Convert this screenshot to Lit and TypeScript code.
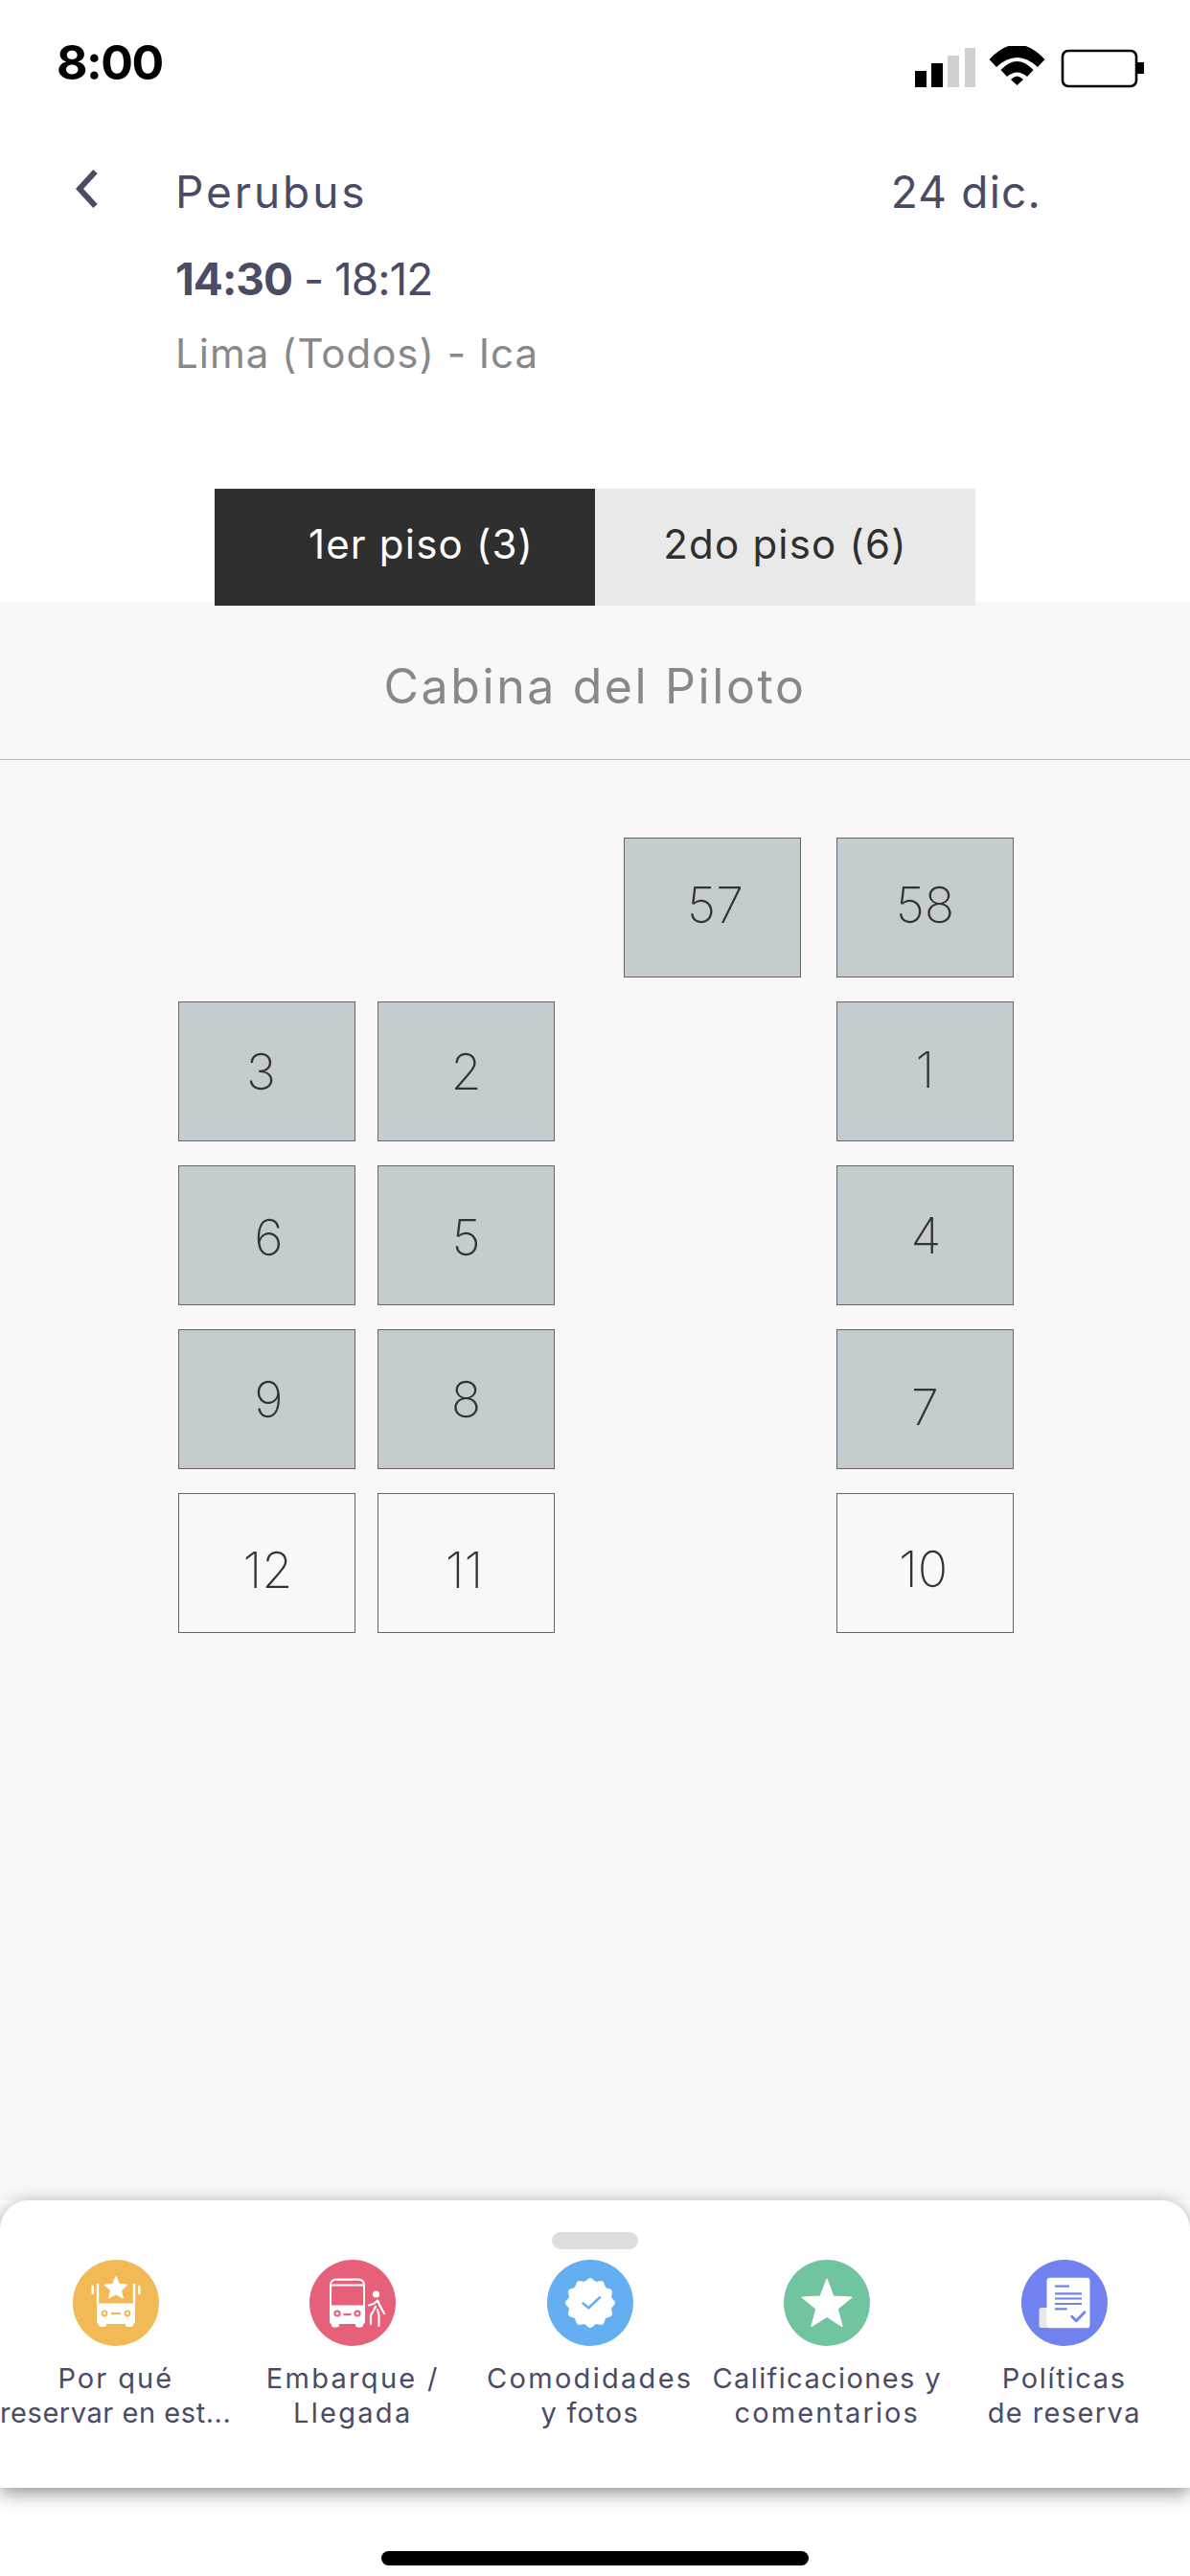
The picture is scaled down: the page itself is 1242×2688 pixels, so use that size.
import { LitElement, html, css, svg } from "lit";
import { customElement } from "lit/decorators.js";

type Seat = { n: string; col: number; row: number; free?: boolean; dx?: number; dy?: number };
const seats: Seat[] = [
  { n: "57", col: 3, row: 1, dx: 3, dy: -3 }, { n: "58", col: 4, row: 1, dy: -3 },
  { n: "3", col: 1, row: 2, dx: -6 }, { n: "2", col: 2, row: 2 }, { n: "1", col: 4, row: 2, dy: -2 },
  { n: "6", col: 1, row: 3, dx: 2, dy: 2 }, { n: "5", col: 2, row: 3, dy: 2 }, { n: "4", col: 4, row: 3, dx: 1 },
  { n: "9", col: 1, row: 4, dx: 2 }, { n: "8", col: 2, row: 4 }, { n: "7", col: 4, row: 4, dy: 8 },
  { n: "12", col: 1, row: 5, free: true, dx: 1, dy: 7 }, { n: "11", col: 2, row: 5, free: true, dx: -2, dy: 7 }, { n: "10", col: 4, row: 5, free: true, dx: -2, dy: 6 },
];

const scallop = (() => {
  const pts: string[] = [];
  for (let i = 0; i < 240; i++) {
    const t = (i / 240) * Math.PI * 2;
    const r = 24.5 + 1.5 * Math.cos(12 * t);
    pts.push(`${(45 + r * Math.cos(t)).toFixed(2)},${(45 + r * Math.sin(t)).toFixed(2)}`);
  }
  return pts.join(" ");
})();

const starPts = (cx: number, cy: number, R: number, r: number) => {
  const pts: string[] = [];
  for (let i = 0; i < 10; i++) {
    const a = -Math.PI / 2 + (i * Math.PI) / 5;
    const d = i % 2 ? r : R;
    pts.push(`${(cx + d * Math.cos(a)).toFixed(2)},${(cy + d * Math.sin(a)).toFixed(2)}`);
  }
  return pts.join(" ");
};

const icons = [
  svg`<circle cx="45" cy="45" r="45" fill="#f2b957"/>
    <polygon points="${starPts(45, 30, 12, 5.5)}" fill="#fff" stroke="#fff" stroke-width="1.5" stroke-linejoin="round"/>
    <path d="M26 25V46M64 25V46" stroke="#fff" stroke-width="2.4" fill="none"/>
    <path d="M20.7 28V35M69.3 28V35" stroke="#fff" stroke-width="2.4" stroke-linecap="round" fill="none"/>
    <path d="M25 45.5H65V65Q65 67 63 67H27Q25 67 25 65Z" fill="#fff"/>
    <rect x="27" y="64" width="8" height="6" rx="2.5" fill="#fff"/><rect x="55" y="64" width="8" height="6" rx="2.5" fill="#fff"/>
    <circle cx="33" cy="56" r="3.4" fill="#f2b957"/><circle cx="33" cy="56" r="1.4" fill="#fff"/>
    <circle cx="57" cy="56" r="3.4" fill="#f2b957"/><circle cx="57" cy="56" r="1.4" fill="#fff"/>
    <rect x="40" y="55" width="10" height="2.2" fill="#f2b957"/>`,
  svg`<circle cx="45" cy="45" r="45" fill="#e6607a"/>
    <path d="M21 27Q21 19.5 28 19.5H51Q58 19.5 58 27V65Q58 67 56 67H23Q21 67 21 65Z" fill="#fff"/>
    <path d="M23 25.5Q23.5 21.8 28 21.8H51Q55.5 21.8 56 25.5Z" fill="#e6607a"/>
    <rect x="23" y="27.5" width="33" height="20" fill="#e6607a"/>
    <rect x="23" y="64" width="8" height="6.5" rx="2.5" fill="#fff"/><rect x="48" y="64" width="8" height="6.5" rx="2.5" fill="#fff"/>
    <circle cx="29" cy="56" r="3.6" fill="#e6607a"/><circle cx="29" cy="56" r="1.5" fill="#fff"/>
    <circle cx="50" cy="56" r="3.6" fill="#e6607a"/><circle cx="50" cy="56" r="1.5" fill="#fff"/>
    <rect x="35.5" y="56" width="8" height="2.2" fill="#e6607a"/>
    <circle cx="69.5" cy="36" r="3.6" fill="#fff"/>
    <path d="M62 47.5L67 46L71 42.5L74 49L78 56M69 49L64 58V67M71 52L72.5 58V69" stroke="#fff" stroke-width="2.2" fill="none" stroke-linecap="round" stroke-linejoin="round"/>`,
  svg`<circle cx="45" cy="45" r="45" fill="#64aff2"/>
    <polygon points="${scallop}" fill="#fff"/>
    <path d="M37.5 45.5L43.3 50.3L55 39.3" stroke="#64aff2" stroke-width="2.6" fill="none" stroke-linecap="round" stroke-linejoin="round"/>`,
  svg`<circle cx="45" cy="45" r="45" fill="#70c4a0"/>
    <polygon points="${starPts(45, 47.5, 27, 11.5)}" fill="#fff" stroke="#fff" stroke-width="1.5" stroke-linejoin="round"/>`,
  svg`<circle cx="45" cy="45" r="45" fill="#6f82f0"/>
    <path d="M21 50H30V71H21Q18.5 71 18.5 68.5V52.5Q18.5 50 21 50Z" fill="#e8e8e8"/>
    <rect x="26.5" y="18.7" width="45" height="52.6" rx="3" fill="#fff"/>
    <path d="M35 27.7H50M35 35.3H63M35 40.5H63M35 46H63M35 51.3H47.7" stroke="#6f82f0" stroke-width="2.2" fill="none"/>
    <path d="M52.7 59.3L57.3 63.7L66 54.7" stroke="#6f82f0" stroke-width="2.8" fill="none" stroke-linecap="round" stroke-linejoin="round"/>`,
];

/* Each line carries the tracking that makes it as wide as in the reference. */
const links: [string, number][][] = [
  [["Por qué", 2], ["reservar en est...", 0.55]],
  [["Embarque /", 2.3], ["Llegada", 2.3]],
  [["Comodidades", 2.3], ["y fotos", 1.3]],
  [["Calificaciones y", 1.4], ["comentarios", 2.1]],
  [["Políticas", 1.7], ["de reserva", 1.4]],
];

@customElement("app-root")
export class AppRoot extends LitElement {
  static styles = css`
    :host {
      display: flex;
      flex-direction: column;
      width: 1242px;
      height: 2688px;
      overflow: hidden;
      background: #fff;
      font-family: Inter, "Liberation Sans", sans-serif;
      color: #4a4b65;
    }
    .status {
      height: 128px;
      box-sizing: border-box;
      display: flex;
      justify-content: space-between;
      padding: 40px 48px 0 59px;
    }
    .clock {
      font-size: 50px;
      line-height: 50px;
      font-weight: 700;
      color: #000;
      letter-spacing: -1.5px;
    }
    .status svg { margin-top: 8px; display: block; }
    .head {
      height: 382px;
      box-sizing: border-box;
      display: flex;
      padding: 44px 0 0 79px;
    }
    .back { width: 104px; flex: none; padding-top: 5px; }
    .back svg { display: block; }
    .info { flex: 1; }
    .top {
      display: flex;
      justify-content: space-between;
      padding-right: 155px;
      font-size: 46px;
      line-height: 56px;
      letter-spacing: 1.2px;
    }
    .top span:first-child { letter-spacing: 2.9px; }
    .times {
      margin-top: 35px;
      font-size: 46px;
      line-height: 56px;
      letter-spacing: -1px;
    }
    .times b { font-weight: 700; }
    .route {
      margin-top: 24px;
      font-size: 42px;
      line-height: 52px;
      color: #888;
      font-weight: 400;
      letter-spacing: 1px;
    }
    .tabs {
      display: flex;
      justify-content: center;
      position: relative;
      z-index: 1;
      margin-bottom: -4px;
    }
    .tab {
      width: 397px;
      height: 122px;
      box-sizing: border-box;
      display: flex;
      align-items: center;
      justify-content: center;
      padding-bottom: 8px;
      font-size: 42px;
      letter-spacing: 1.2px;
      background: #e9e9e9;
      color: #2f2f2f;
    }
    .tab.on { background: #2f2f2f; color: #fff; padding-left: 34px; }
    .deck {
      flex: 1;
      background: #f8f8f8;
      display: flex;
      flex-direction: column;
    }
    .cabin {
      height: 165px;
      box-sizing: border-box;
      border-bottom: 1px solid #bdbdbd;
      display: flex;
      align-items: center;
      justify-content: center;
      font-size: 50px;
      letter-spacing: 2.6px;
      color: #888;
      padding-top: 12px;
    }
    .seats {
      display: grid;
      grid-template-columns: 186px 185px 23px 185px 72px 185px 37px 185px;
      grid-auto-rows: 146px;
      row-gap: 25px;
      padding-top: 81px;
    }
    .seat {
      border: 1.5px solid #666;
      box-sizing: border-box;
      background: #c4ccd0;
      display: flex;
      align-items: center;
      justify-content: center;
      font-size: 52px;
      font-weight: 200;
      color: #333;
    }
    .seat.free { background: transparent; }
    .panel {
      height: 300px;
      box-sizing: border-box;
      background: #fff;
      border-radius: 30px 30px 0 0;
      box-shadow: 0 5px 20px rgba(0, 0, 0, 0.45);
      position: relative;
      z-index: 2;
      padding-top: 33px;
      display: flex;
      flex-direction: column;
      align-items: center;
    }
    .handle {
      width: 90px;
      height: 18px;
      border-radius: 9px;
      background: #ddd;
    }
    .links {
      align-self: flex-start;
      margin: 11px 0 0 -3px;
      display: flex;
    }
    .link {
      width: 247.5px;
      flex: none;
      display: flex;
      flex-direction: column;
      align-items: center;
      font-size: 29px;
      line-height: 36px;
      text-align: center;
      white-space: nowrap;
    }
    .link svg { display: block; margin-bottom: 16px; }
    .foot {
      height: 92px;
      flex: none;
      display: flex;
      justify-content: center;
      padding-top: 66px;
      box-sizing: border-box;
    }
    .bar {
      width: 446px;
      height: 15px;
      border-radius: 8px;
      background: #000;
    }
  `;

  render() {
    return html`
      <div class="status">
        <div class="clock">8:00</div>
        <svg width="239" height="48" viewBox="954 48 239 48" aria-hidden="true">
          <rect x="954" y="74" width="12" height="17" fill="#000"/>
          <rect x="971" y="66" width="12" height="25" fill="#000"/>
          <rect x="988" y="58" width="12" height="33" fill="#d0d0d0"/>
          <rect x="1006" y="50" width="11" height="41" fill="#d0d0d0"/>
          <path d="M1031.5 62 Q1060.5 31 1089.5 62 L1082 70 Q1060.5 50 1039 70Z" fill="#000"/>
          <path d="M1043.5 73 Q1060.5 55 1077.5 73 L1071 80 Q1060.5 71 1050 80Z" fill="#000"/>
          <path d="M1054 83 Q1060.5 76 1067 83 L1060.5 89Z" fill="#000"/>
          <rect x="1108" y="53" width="77" height="37" rx="6" fill="none" stroke="#000" stroke-width="2.6"/>
          <rect x="1186" y="65" width="7" height="12" fill="#000"/>
        </svg>
      </div>
      <div class="head">
        <div class="back">
          <svg width="24" height="40" viewBox="0 0 24 40"><path d="M20.5 2L4 20L20.5 38" fill="none" stroke="#4a4b65" stroke-width="6"/></svg>
        </div>
        <div class="info">
          <div class="top"><span>Perubus</span><span>24 dic.</span></div>
          <div class="times"><b>14:30</b> - 18:12</div>
          <div class="route">Lima (Todos) - Ica</div>
        </div>
      </div>
      <div class="tabs">
        <div class="tab on">1er piso (3)</div>
        <div class="tab">2do piso (6)</div>
      </div>
      <div class="deck">
        <div class="cabin">Cabina del Piloto</div>
        <div class="seats">
          ${seats.map(
            (s) => html`<div
              class="seat ${s.free ? "free" : ""}"
              style="grid-column:${s.col * 2};grid-row:${s.row}"
            ><span style="margin:${(s.dy ?? 0) * 2}px 0 0 ${(s.dx ?? 0) * 2}px">${s.n}</span></div>`
          )}
        </div>
      </div>
      <div class="panel">
        <div class="handle"></div>
        <div class="links">
          ${links.map(
            (lines, i) => html`<div class="link">
              <svg width="90" height="90" viewBox="0 0 90 90">${icons[i]}</svg>
              ${lines.map((l) => html`<span style="letter-spacing:${l[1]}px">${l[0]}</span>`)}
            </div>`
          )}
        </div>
      </div>
      <div class="foot"><div class="bar"></div></div>
    `;
  }
}
